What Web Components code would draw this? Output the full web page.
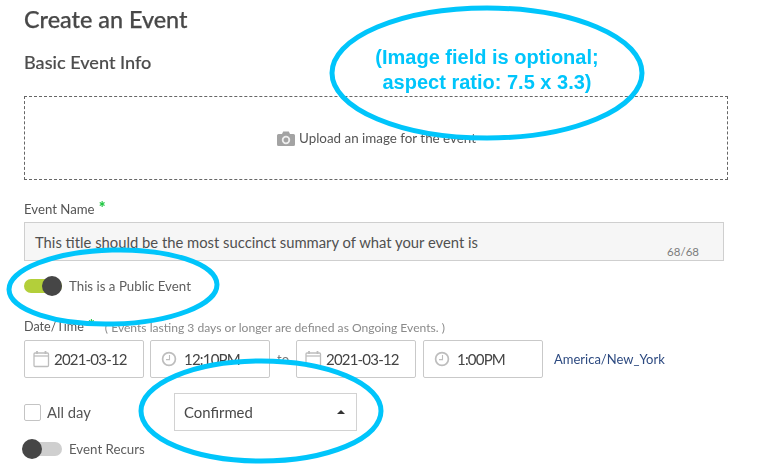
<!DOCTYPE html>
<html>
<head>
<meta charset="utf-8">
<title>Create an Event</title>
<style>
  html, body { margin: 0; background: #fff; }
  body { width: 768px; height: 475px; overflow: hidden; position: relative; font-family: Lato, "Open Sans", sans-serif; color: #4a4a4a; }
</style>
</head>
<body>
<event-form></event-form>
<call-outs></call-outs>

<script>
const ICONS = {
  calendar: `<svg width="17" height="18" viewBox="0 0 17 18" fill="none" stroke="#bdbdbd" stroke-width="1.3"><rect x="1" y="3" width="14.5" height="13.5" rx="1"/><path d="M1 6h14.5"/><path d="M4 1v3M12.5 1v3" stroke-width="1.8"/></svg>`,
  clock: `<svg width="16" height="16" viewBox="0 0 16 16" fill="none" stroke="#bdbdbd"><circle cx="8" cy="8" r="6.4" stroke-width="1.7"/><path d="M8.5 4v4.6H5" stroke-width="1.1"/></svg>`,
  camera: `<svg width="18" height="16" viewBox="0 0 18 16"><path fill="#a3a3a3" d="M1.5 3H5l1.2-2.4h5.6L13 3h3.5A1.5 1.5 0 0 1 18 4.5v9a1.5 1.5 0 0 1-1.5 1.5h-15A1.5 1.5 0 0 1 0 13.500v-9A1.500 1.500 0 0 1 1.500 3z"/><circle cx="9" cy="9" r="3.300" fill="none" stroke="#eee" stroke-width="1.800"/></svg>`
};

class UiToggle extends HTMLElement {
  constructor() {
    super();
    this.attachShadow({ mode: 'open' });
    this.shadowRoot.innerHTML = `
      <style>
        :host { display: flex; align-items: center; gap: 7px; font-size: 13.3px; color: #5e5e5e; }
        .track { position: relative; width: 38px; height: 14px; border-radius: 7px; background: #cfcfcf; }
        :host([on]) .track { background: #b3cf3a; }
        .knob { position: absolute; top: -3px; left: -2px; width: 20px; height: 20px; border-radius: 50%; background: #464646; }
        :host([on]) .knob { left: 18px; }
      </style>
      <div class="track"><div class="knob"></div></div>
      <slot></slot>
    `;
  }
}

class PickerField extends HTMLElement {
  constructor() {
    super();
    this.attachShadow({ mode: 'open' });
    const icon = ICONS[this.getAttribute('icon')];
    const kind = this.getAttribute('icon');
    this.shadowRoot.innerHTML = `
      <style>
        :host { display: flex; align-items: center; box-sizing: border-box; width: 120px; height: 38px; border: 1px solid #c9c9c9; border-radius: 2px; background: #fff; font-size: 15px; letter-spacing: -0.8px; color: #444; }
        .icon { display: flex; margin-left: ${kind === 'clock' ? 10 : 8}px; margin-right: ${kind === 'clock' ? 7 : 4}px; }
      </style>
      <span class="icon">${icon}</span><slot></slot>
    `;
  }
}

class FieldLabel extends HTMLElement {
  constructor() {
    super();
    this.attachShadow({ mode: 'open' });
    this.shadowRoot.innerHTML = `
      <style>
        :host { display: inline-block; position: relative; font-size: 13.2px; color: #555; line-height: 16px; }
        .req { position: absolute; top: 1px; right: -11px; color: #1fc742; font-size: 16px; font-weight: 900; line-height: 12px; }
      </style>
      <slot></slot><span class="req">*</span>
    `;
  }
}

class EventForm extends HTMLElement {
  constructor() {
    super();
    this.attachShadow({ mode: 'open' });
    this.shadowRoot.innerHTML = `
      <style>
        :host { display: block; padding: 6px 0 0 24px; width: 704px; filter: blur(0.3px); }
        h1 { margin: 0; font-size: 23.4px; line-height: 26px; font-weight: 500; color: #484848; -webkit-text-stroke: 0.25px #484848; }
        h2 { margin: 19px 0 0; font-size: 18.1px; line-height: 22px; font-weight: 500; color: #4d4d4d; -webkit-text-stroke: 0.15px #4d4d4d; }
        .upload { box-sizing: border-box; height: 84px; margin-top: 23px; border: 1px dashed #666; display: flex; align-items: center; justify-content: center; gap: 4px; font-size: 13.4px; color: #555; padding-left: 1px; }
        .upload svg { margin-top: 1px; }
        .name-label { margin-top: 18px; height: 16px; }
        .name { box-sizing: border-box; position: relative; width: 700px; height: 39px; margin-top: 8px; border: 1px solid #cfcfcf; background: #f6f6f6; padding: 10px 10px 0; font-size: 14.8px; line-height: 18px; color: #505050; }
        .count { position: absolute; right: 24px; bottom: 1px; font-size: 11.5px; line-height: 14px; color: #7c7c7c; }
        .public { margin-top: 17px; }
        .date-label { display: flex; align-items: center; margin-top: 25px; height: 16px; }
        .date-label field-label { font-size: 12.6px; }
        .hint { margin-left: 21px; font-size: 12.1px; color: #8a8a8a; }
        .dates { display: flex; align-items: center; margin-top: 5px; }
        .dates picker-field + picker-field { margin-left: 6px; }
        .dates picker-field:nth-of-type(4) { margin-left: 7px; }
        .to { width: 26px; text-align: center; font-size: 13px; color: #777; }
        .zone { margin-left: 11px; font-size: 13px; color: #2d4a80; }
        .status-row { display: flex; align-items: center; margin-top: 15px; height: 38px; }
        .check { box-sizing: border-box; width: 17px; height: 17px; border: 1px solid #c4c4c4; border-radius: 2px; }
        .allday { margin-left: 6px; width: 127px; font-size: 14.8px; color: #555; }
        .select { box-sizing: border-box; display: flex; align-items: center; justify-content: space-between; width: 183px; height: 38px; border: 1px solid #d2d2d2; padding: 0 11px 0 9px; font-size: 14.9px; color: #484848; }
        .caret { width: 0; height: 0; border: 4px solid transparent; border-top: 0; border-bottom: 4px solid #333; }
        .recurs { margin-top: 10px; }
      </style>
      <h1>Create an Event</h1>
      <h2>Basic Event Info</h2>
      <div class="upload">${ICONS.camera}<span>Upload an image for the event</span></div>
      <div class="name-label"><field-label>Event Name</field-label></div>
      <div class="name">This title should be the most succinct summary of what your event is<span class="count">68/68</span></div>
      <ui-toggle class="public" on>This is a Public Event</ui-toggle>
      <div class="date-label"><field-label>Date/Time</field-label><span class="hint">( Events lasting 3 days or longer are defined as Ongoing Events. )</span></div>
      <div class="dates">
        <picker-field icon="calendar">2021-03-12</picker-field>
        <picker-field icon="clock">12:10PM</picker-field>
        <span class="to">to</span>
        <picker-field icon="calendar">2021-03-12</picker-field>
        <picker-field icon="clock">1:00PM</picker-field>
        <span class="zone">America/New_York</span>
      </div>
      <div class="status-row">
        <div class="check"></div>
        <span class="allday">All day</span>
        <div class="select"><span>Confirmed</span><span class="caret"></span></div>
      </div>
      <ui-toggle class="recurs">Event Recurs</ui-toggle>
    `;
  }
}

// annotation layer drawn over the form
class CallOuts extends HTMLElement {
  constructor() {
    super();
    this.attachShadow({ mode: 'open' });
    this.shadowRoot.innerHTML = `
      <style>
        :host { display: block; position: absolute; inset: 0; pointer-events: none; }
        svg { position: absolute; left: 0; top: 0; }
        ellipse { fill: none; stroke: #00c5fb; stroke-width: 5; }
        .note { position: absolute; left: 330px; top: 45px; width: 314px; text-align: center; font-family: "Liberation Sans", Arial, sans-serif; font-weight: 700; font-size: 20px; line-height: 24.5px; color: #00c5fb; }
      </style>
      <svg width="768" height="475">
        <ellipse cx="487" cy="73" rx="155" ry="65"/>
        <ellipse cx="113" cy="287" rx="104" ry="37" transform="rotate(-1.5 113 287)"/>
        <ellipse cx="261" cy="411" rx="120" ry="50"/>
      </svg>
      <div class="note">(Image field is optional;<br>aspect ratio: 7.5 x 3.3)</div>
    `;
  }
}

customElements.define('ui-toggle', UiToggle);
customElements.define('picker-field', PickerField);
customElements.define('field-label', FieldLabel);
customElements.define('event-form', EventForm);
customElements.define('call-outs', CallOuts);
</script>
</body>
</html>
